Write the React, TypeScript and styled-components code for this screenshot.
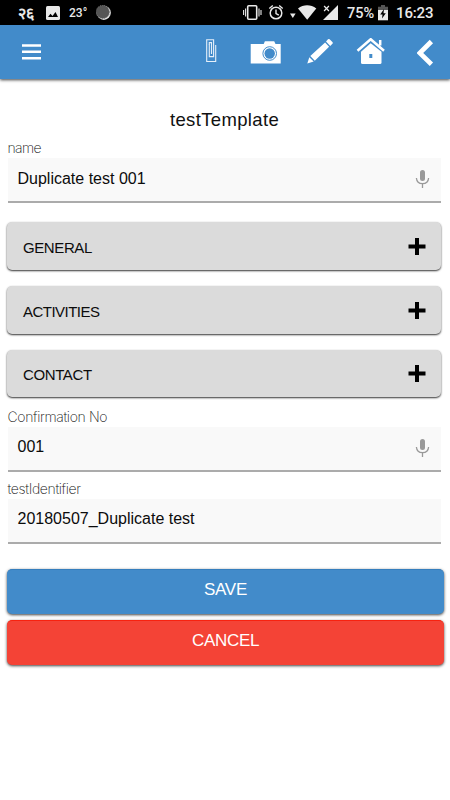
import React from "react";
import styled, { createGlobalStyle } from "styled-components";

const GlobalStyle = createGlobalStyle`
  * { box-sizing: border-box; }
  body { margin: 0; background: #fff; font-family: "Liberation Sans", Arial, sans-serif; color: #111; }
  svg { display: block; flex: none; }
`;

const Screen = styled.div`
  width: 450px;
  height: 800px;
  overflow: hidden;
  background: #fff;
`;

const StatusBar = styled.div`
  display: flex;
  align-items: center;
  height: 25px;
  padding: 0 17px 0 18px;
  background: #000;
  color: #e9e9e9;
  font-family: Roboto, sans-serif;
`;

const StatusGroup = styled.div`
  display: flex;
  align-items: center;
  height: 25px;
  &:last-child { margin-left: auto; }
`;

const StatusText = styled.span<{ $width: number; $size: number; $gap?: number; $spacing?: number; $weight?: number }>`
  width: ${(p) => p.$width}px;
  margin-left: ${(p) => p.$gap ?? 0}px;
  font-size: ${(p) => p.$size}px;
  letter-spacing: ${(p) => p.$spacing ?? 0}px;
  font-weight: ${(p) => p.$weight ?? 500};
  line-height: 25px;
  padding-top: 2px;
  white-space: nowrap;
`;

const AppBar = styled.header`
  display: flex;
  align-items: center;
  justify-content: space-between;
  height: 54px;
  padding: 0 16px 0 22px;
  background: #428bca;
  box-shadow: 0 1px 3px rgba(0, 0, 0, 0.75);
`;

const Actions = styled.nav`
  display: grid;
  grid-template-columns: 45px 55px 51px 61px 17px;
  justify-items: start;
`;

const IconButton = styled.button`
  padding: 0;
  border: 0;
  background: none;
`;

const Form = styled.main`
  padding: 30px 6px 0 7px;
`;

const Title = styled.h1`
  margin: 0;
  height: 22px;
  padding-right: 2px;
  font-size: 18.5px;
  font-weight: 400;
  line-height: 22px;
  letter-spacing: 0.35px;
  text-align: center;
`;

const Field = styled.label<{ $top: number }>`
  display: block;
  width: 434px;
  margin-top: ${(p) => p.$top}px;
`;

const FieldLabel = styled.span<{ $spacing: number }>`
  display: block;
  height: 20px;
  padding-left: 0.5px;
  font-family: Inter, "Liberation Sans", sans-serif;
  font-size: 14px;
  font-weight: 200;
  line-height: 20px;
  letter-spacing: ${(p) => p.$spacing}px;
  color: #111;
`;

const FieldBox = styled.span`
  display: flex;
  align-items: center;
  justify-content: space-between;
  height: 45px;
  margin-left: 0.5px;
  padding: 0 11px 1px 10px;
  border-bottom: 2px solid #ababab;
  background: #f9f9f9;
`;

const Value = styled.span`
  padding-bottom: 1px;
  font-size: 16px;
  line-height: 20px;
  color: #0c0c0c;
`;

const Sections = styled.div`
  display: grid;
  gap: 16px;
  width: 434px;
  margin-top: 19px;
`;

const Section = styled.button`
  display: flex;
  align-items: center;
  justify-content: space-between;
  height: 47.8px;
  padding: 2px 15px 0 16px;
  border: 0;
  border-radius: 5px;
  background: #dbdbdb;
  box-shadow: 0 1px 2px rgba(0, 0, 0, 0.8);
  font: 400 15px "Liberation Sans", Arial, sans-serif;
  color: #0c0c0c;
`;

const SectionName = styled.span<{ $spacing: number }>`
  padding-top: 1px;
  letter-spacing: ${(p) => p.$spacing}px;
`;

const Buttons = styled.div`
  display: grid;
  gap: 6px;
  margin-top: 25px;
`;

const FormButton = styled.button<{ $color: string; $edge: string }>`
  height: 45px;
  padding: 0 0 3px;
  border: 0;
  border-top: 1px solid ${(p) => p.$edge};
  border-radius: 5px;
  background: ${(p) => p.$color};
  box-shadow: 0 1px 3px rgba(0, 0, 0, 0.75);
  font: 400 17px "Liberation Sans", Arial, sans-serif;
  letter-spacing: -0.3px;
  color: #fff;
`;

const Mic = () => (
  <svg width="15" height="20" viewBox="0 0 15 20">
    <rect x="5" y="1" width="5" height="11" rx="2.5" fill="#999" />
    <path d="M1.4 9c.3 3.7 2.8 5.7 6.1 5.7s5.8-2 6.1-5.7M7.5 15v4" fill="none" stroke="#999" strokeWidth="1.3" />
  </svg>
);

const Plus = () => (
  <svg width="18" height="18" viewBox="0 0 18 18">
    <path d="M9 0v17M.5 8.5h17" stroke="#000" strokeWidth="4" />
  </svg>
);

const sections = [
  { name: "GENERAL", spacing: -0.4 },
  { name: "ACTIVITIES", spacing: -0.52 },
  { name: "CONTACT", spacing: -0.38 },
];

export default function App() {
  return (
    <Screen>
      <GlobalStyle />
      <StatusBar>
        <StatusGroup>
          <StatusText $width={28} $size={16} $weight={700}>२६</StatusText>
          <svg width="14" height="14" viewBox="0 0 14 14">
            <rect width="14" height="14" rx="1.5" fill="#e9e9e9" />
            <path d="M2 11l2.5-3.2 2 2.2 3-4L12 11z" fill="#000" />
          </svg>
          <StatusText $width={27} $size={12} $gap={9}>23°</StatusText>
          <svg width="15" height="15" viewBox="0 0 15 15">
            <circle cx="7.8" cy="7.8" r="7.1" fill="#ddd" />
            <circle cx="6.8" cy="6.9" r="6.6" fill="#555" stroke="#777" strokeDasharray="1 1" />
          </svg>
        </StatusGroup>
        <StatusGroup>
          <svg width="96" height="17" viewBox="243 4 96 17">
            <rect x="247.7" y="5.7" width="9" height="13.5" rx="1" fill="none" stroke="#e9e9e9" strokeWidth="1.6" />
            <path d="M243.6 10v5M245.6 8.5v8M259 8.5v8M261 10v5" stroke="#e9e9e9" strokeWidth="1.1" />
            <circle cx="276" cy="13" r="5.8" fill="none" stroke="#e9e9e9" strokeWidth="1.5" />
            <path d="M269.3 8.5l3.5-3M282.7 8.5l-3.5-3M276 9.5v4l2.8 1.7" fill="none" stroke="#e9e9e9" strokeWidth="1.4" />
            <path d="M290 13.5h5.6l-2.8 4.5z" fill="#e9e9e9" />
            <path d="M298 8.5c5.5-4.3 12.8-4.3 18.3 0l-9.1 11.3z" fill="#e9e9e9" />
            <path d="M338 5v15h-15z" fill="#e9e9e9" />
            <path d="M324.1 6l4.8 5M328.9 6l-4.8 5" stroke="#000" strokeWidth="3" />
            <path d="M324.1 6l4.8 5M328.9 6l-4.8 5" stroke="#e9e9e9" strokeWidth="1.2" />
          </svg>
          <StatusText $width={31} $size={14.5} $gap={8}>75%</StatusText>
          <svg width="10" height="16" viewBox="0 0 10 16">
            <path d="M3 0h4v1.7h3V5H0V1.7h3z" fill="#555" />
            <path d="M0 5h10v10.3H0z" fill="#e9e9e9" />
            <path d="M6 4L2.2 9.5h2.3L4 13.5l3.8-5.2H5.5z" fill="#000" />
          </svg>
          <StatusText $width={37} $size={15} $gap={8} $spacing={-0.15}>16:23</StatusText>
        </StatusGroup>
      </StatusBar>
      <AppBar>
        <IconButton aria-label="Menu">
          <svg width="20" height="18" viewBox="0 0 20 18">
            <path d="M0 2.5h19M0 8.8h19M0 15.3h19" stroke="#fff" strokeWidth="2.5" />
          </svg>
        </IconButton>
        <Actions>
          <IconButton aria-label="Attach">
            <svg width="12" height="28" viewBox="205 38 12 28">
              <path d="M209.3 44.5v12.1h4.3V39.7h-6.9v21.8h9V45" fill="none" stroke="#e6f0fa" strokeWidth="1.1" />
              <path d="M209.3 45V42.6h2.2V54" fill="none" stroke="#e6f0fa" strokeWidth="1.1" />
            </svg>
          </IconButton>
          <IconButton aria-label="Camera">
            <svg width="32" height="28" viewBox="250 38 32 28">
              <path d="M250.7 44h13l1.2-2.7h9.3l1.3 2.7h5.2v19.5h-30z" fill="#fff" />
              <circle cx="269.7" cy="53.5" r="6.8" fill="none" stroke="#428bca" strokeWidth="1" />
              <circle cx="269.7" cy="53.5" r="5.2" fill="#428bca" />
            </svg>
          </IconButton>
          <IconButton aria-label="Edit">
            <svg width="28" height="28" viewBox="304 38 28 28">
              <path d="M306.3 63.5l2-6.3 4.4 4.2zM309.3 56l14.8-13.6 4 4.3-14.3 14zM325 41.5l2-2.2q.8-.8 1.6 0l2.8 2.8q.8.8 0 1.6l-2.2 2.2z" fill="#fff" />
            </svg>
          </IconButton>
          <IconButton aria-label="Home">
            <svg width="30" height="28" viewBox="356 38 30 28">
              <path d="M357.5 50.8l13.2-11.6 13.3 11.6M380.2 40v5.5" fill="none" stroke="#fff" strokeWidth="2.5" />
              <path d="M361 51.8l9.7-8.6 10.8 8.6v10.7q0 1.5-1.5 1.5h-17.5q-1.5 0-1.5-1.5z" fill="#fff" />
              <path d="M369.3 54h3v4h-3z" fill="#428bca" />
            </svg>
          </IconButton>
          <IconButton aria-label="Back">
            <svg width="17" height="28" viewBox="417 38 17 28">
              <path d="M431.4 41.5L419.8 53l11.6 11.3" fill="none" stroke="#fff" strokeWidth="4.7" />
            </svg>
          </IconButton>
        </Actions>
      </AppBar>
      <Form>
        <Title>testTemplate</Title>
        <Field $top={7}>
          <FieldLabel $spacing={-0.6}>name</FieldLabel>
          <FieldBox><Value>Duplicate test 001</Value><Mic /></FieldBox>
        </Field>
        <Sections>
          {sections.map((s) => (
            <Section key={s.name}><SectionName $spacing={s.spacing}>{s.name}</SectionName><Plus /></Section>
          ))}
        </Sections>
        <Field $top={9.6}>
          <FieldLabel $spacing={-0.35}>Confirmation No</FieldLabel>
          <FieldBox><Value>001</Value><Mic /></FieldBox>
        </Field>
        <Field $top={7}>
          <FieldLabel $spacing={-0.35}>testIdentifier</FieldLabel>
          <FieldBox><Value>20180507_Duplicate test</Value></FieldBox>
        </Field>
        <Buttons>
          <FormButton $color="#428bca" $edge="#357ebd">SAVE</FormButton>
          <FormButton $color="#f44336" $edge="#f8220f">CANCEL</FormButton>
        </Buttons>
      </Form>
    </Screen>
  );
}
